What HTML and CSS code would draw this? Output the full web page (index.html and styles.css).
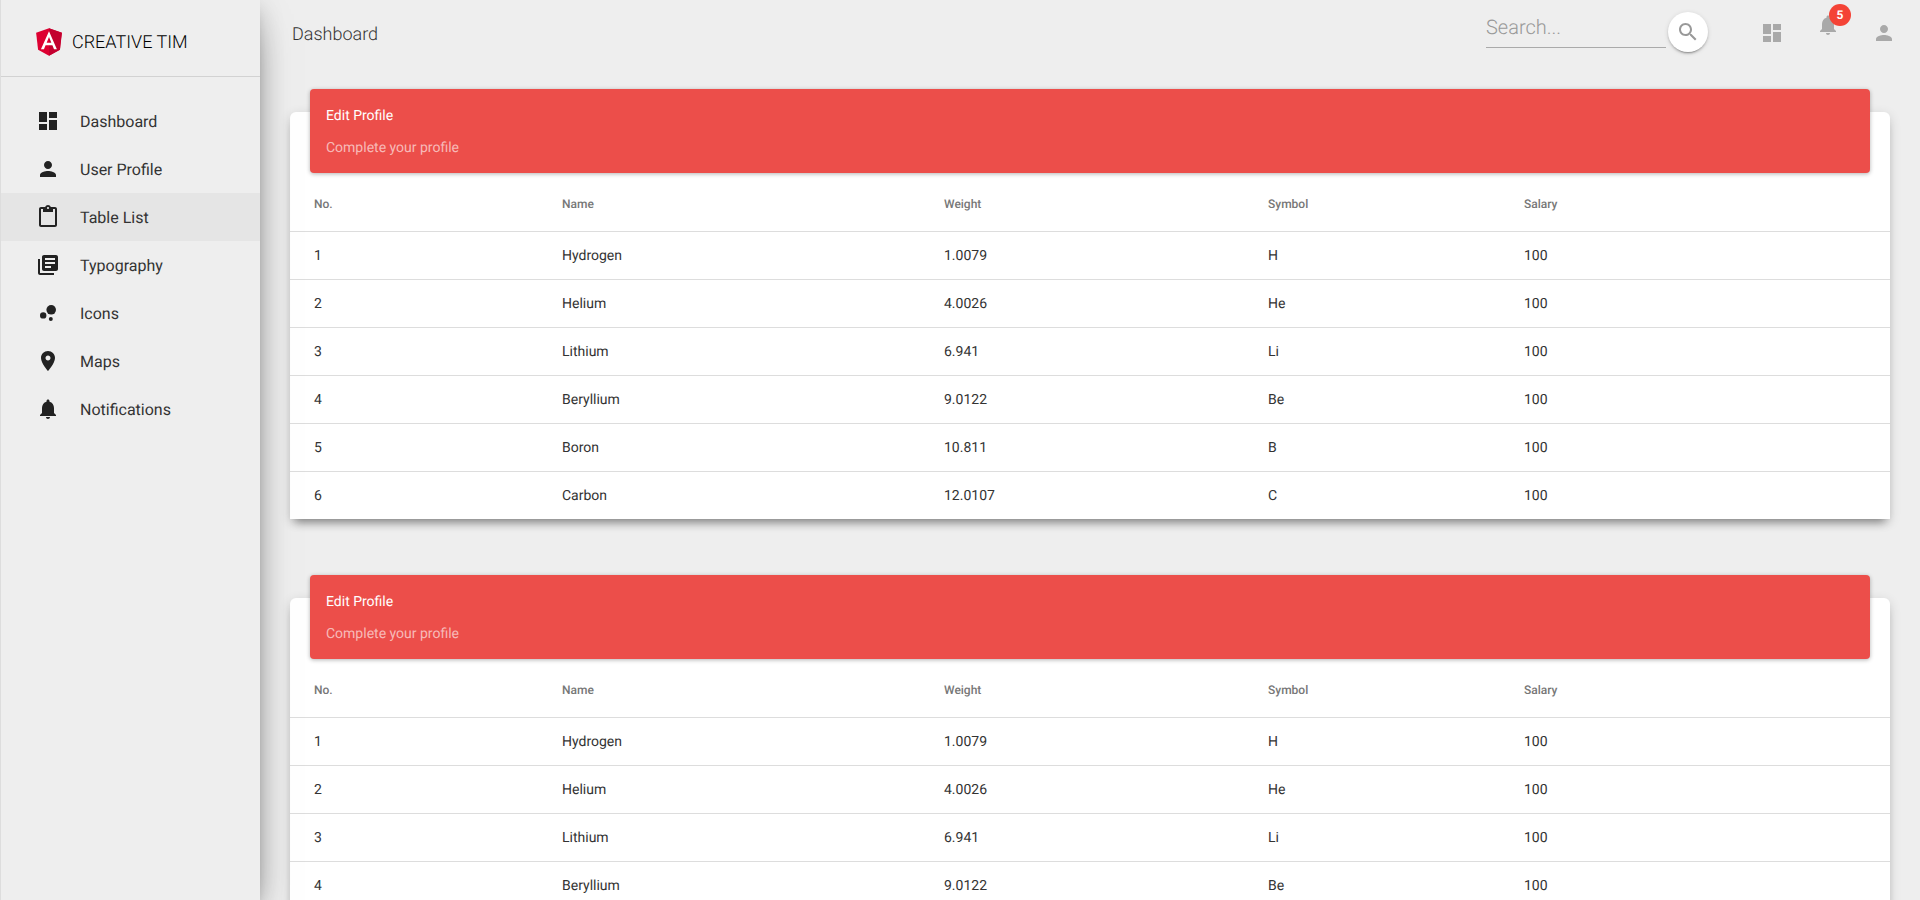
FILE: index.html
```html
<!DOCTYPE html>
<html lang="en">

<head>
    <meta charset="UTF-8">
    <title>Table List</title>
    <link rel="stylesheet" href="styles.css">
</head>

<body>
    <div class="wrapper">
        <aside class="sidebar">
            <div class="logo">
                <svg class="logo-img" viewBox="31 30 188 200">
                    <polygon fill="#dd0031" points="125,30 31.9,63.2 46.1,186.3 125,230 203.9,186.3 218.1,63.2" />
                    <polygon fill="#c3002f" points="125,30 125,52.2 125,230 203.9,186.3 218.1,63.2" />
                    <path fill="#fff" d="M125 52.1L66.8 182.6h21.7l11.7-29.2h49.4l11.7 29.2H182L125 52.1zm17 83.3h-34l17-40.9 17 40.9z" />
                </svg>
                <span>Creative Tim</span>
            </div>
            <ul class="nav">
                <li class="nav-item">
                    <svg class="icon" viewBox="0 0 24 24"><path d="M3 13h8V3H3v10zm0 8h8v-6H3v6zm10 0h8V11h-8v10zm0-18v6h8V3h-8z" /></svg>
                    <span>Dashboard</span>
                </li>
                <li class="nav-item">
                    <svg class="icon" viewBox="0 0 24 24"><path d="M12 12c2.21 0 4-1.79 4-4s-1.79-4-4-4-4 1.79-4 4 1.79 4 4 4zm0 2c-2.67 0-8 1.34-8 4v2h16v-2c0-2.66-5.33-4-8-4z" /></svg>
                    <span>User Profile</span>
                </li>
                <li class="nav-item active">
                    <svg class="icon" viewBox="0 0 24 24"><path d="M19 2h-4.18C14.4.84 13.3 0 12 0c-1.3 0-2.4.84-2.82 2H5c-1.1 0-2 .9-2 2v16c0 1.1.9 2 2 2h14c1.1 0 2-.9 2-2V4c0-1.1-.9-2-2-2zm-7 0c.55 0 1 .45 1 1s-.45 1-1 1-1-.45-1-1 .45-1 1-1zm7 18H5V4h2v3h10V4h2v16z" /></svg>
                    <span>Table List</span>
                </li>
                <li class="nav-item">
                    <svg class="icon" viewBox="0 0 24 24"><path d="M4 6H2v14c0 1.1.9 2 2 2h14v-2H4V6zm16-4H8c-1.1 0-2 .9-2 2v12c0 1.1.9 2 2 2h12c1.1 0 2-.9 2-2V4c0-1.1-.9-2-2-2zm-1 9H9V9h10v2zm-4 4H9v-2h6v2zm4-8H9V5h10v2z" /></svg>
                    <span>Typography</span>
                </li>
                <li class="nav-item">
                    <svg class="icon" viewBox="0 0 24 24"><circle cx="7.2" cy="14.4" r="3.2" /><circle cx="14.8" cy="18" r="2" /><circle cx="15.2" cy="8.8" r="4.8" /></svg>
                    <span>Icons</span>
                </li>
                <li class="nav-item">
                    <svg class="icon" viewBox="0 0 24 24"><path d="M12 2C8.13 2 5 5.13 5 9c0 5.25 7 13 7 13s7-7.75 7-13c0-3.87-3.13-7-7-7zm0 9.5c-1.38 0-2.5-1.12-2.5-2.5s1.12-2.5 2.5-2.5 2.5 1.12 2.5 2.5-1.12 2.5-2.5 2.5z" /></svg>
                    <span>Maps</span>
                </li>
                <li class="nav-item">
                    <svg class="icon" viewBox="0 0 24 24"><path d="M12 22c1.1 0 2-.9 2-2h-4c0 1.1.89 2 2 2zm6-6v-5c0-3.07-1.64-5.64-4.5-6.32V4c0-.83-.67-1.5-1.5-1.5s-1.5.67-1.5 1.5v.68C7.63 5.36 6 7.92 6 11v5l-2 2v1h16v-1l-2-2z" /></svg>
                    <span>Notifications</span>
                </li>
            </ul>
        </aside>

        <div class="main-panel">
            <nav class="navbar">
                <span class="navbar-brand">Dashboard</span>
                <div class="navbar-right">
                    <div class="search-input">Search...</div>
                    <button class="search-btn">
                        <svg class="icon-sm" viewBox="0 0 24 24"><path d="M15.5 14h-.79l-.28-.27C15.41 12.59 16 11.11 16 9.5 16 5.91 13.09 3 9.5 3S3 5.91 3 9.5 5.91 16 9.5 16c1.61 0 3.09-.59 4.23-1.57l.27.28v.79l5 4.99L20.49 19l-4.99-5zm-6 0C7.01 14 5 11.99 5 9.5S7.01 5 9.5 5 14 7.01 14 9.5 11.99 14 9.5 14z" /></svg>
                    </button>
                    <svg class="nav-icon" viewBox="0 0 24 24"><path d="M3 13h8V3H3v10zm0 8h8v-6H3v6zm10 0h8V11h-8v10zm0-18v6h8V3h-8z" /></svg>
                    <div class="bell">
                        <svg class="nav-icon" viewBox="0 0 24 24"><path d="M12 22c1.1 0 2-.9 2-2h-4c0 1.1.89 2 2 2zm6-6v-5c0-3.07-1.64-5.64-4.5-6.32V4c0-.83-.67-1.5-1.5-1.5s-1.5.67-1.5 1.5v.68C7.63 5.36 6 7.92 6 11v5l-2 2v1h16v-1l-2-2z" /></svg>
                        <span class="badge">5</span>
                    </div>
                    <svg class="nav-icon" viewBox="0 0 24 24"><path d="M12 12c2.21 0 4-1.79 4-4s-1.79-4-4-4-4 1.79-4 4 1.79 4 4 4zm0 2c-2.67 0-8 1.34-8 4v2h16v-2c0-2.66-5.33-4-8-4z" /></svg>
                </div>
            </nav>

            <div class="content">
                <div class="card">
                    <div class="card-header">
                        <h4>Edit Profile</h4>
                        <p>Complete your profile</p>
                    </div>
                    <table>
                        <thead>
                            <tr><th class="col-no">No.</th><th class="col-name">Name</th><th class="col-weight">Weight</th><th class="col-symbol">Symbol</th><th>Salary</th></tr>
                        </thead>
                        <tbody>
                            <tr><td>1</td><td>Hydrogen</td><td>1.0079</td><td>H</td><td>100</td></tr>
                            <tr><td>2</td><td>Helium</td><td>4.0026</td><td>He</td><td>100</td></tr>
                            <tr><td>3</td><td>Lithium</td><td>6.941</td><td>Li</td><td>100</td></tr>
                            <tr><td>4</td><td>Beryllium</td><td>9.0122</td><td>Be</td><td>100</td></tr>
                            <tr><td>5</td><td>Boron</td><td>10.811</td><td>B</td><td>100</td></tr>
                            <tr><td>6</td><td>Carbon</td><td>12.0107</td><td>C</td><td>100</td></tr>
                        </tbody>
                    </table>
                </div>

                <div class="card">
                    <div class="card-header">
                        <h4>Edit Profile</h4>
                        <p>Complete your profile</p>
                    </div>
                    <table>
                        <thead>
                            <tr><th class="col-no">No.</th><th class="col-name">Name</th><th class="col-weight">Weight</th><th class="col-symbol">Symbol</th><th>Salary</th></tr>
                        </thead>
                        <tbody>
                            <tr><td>1</td><td>Hydrogen</td><td>1.0079</td><td>H</td><td>100</td></tr>
                            <tr><td>2</td><td>Helium</td><td>4.0026</td><td>He</td><td>100</td></tr>
                            <tr><td>3</td><td>Lithium</td><td>6.941</td><td>Li</td><td>100</td></tr>
                            <tr><td>4</td><td>Beryllium</td><td>9.0122</td><td>Be</td><td>100</td></tr>
                        </tbody>
                    </table>
                </div>
            </div>
        </div>
    </div>
</body>

</html>
```

FILE: styles.css
```css
* {
    box-sizing: border-box;
}

html,
body {
    margin: 0;
    height: 100%;
    overflow: hidden;
}

body {
    background: #eee;
    color: #333;
    font-family: Roboto, "Liberation Sans", sans-serif;
    font-size: 14px;
    text-rendering: geometricPrecision;
}

.wrapper {
    display: flex;
    height: 900px;
    overflow: hidden;
}

.sidebar {
    position: relative;
    z-index: 2;
    flex: 0 0 260px;
    background: #eee;
    border-left: 1px solid #ddd;
    box-shadow: 0 16px 38px -12px rgba(0, 0, 0, 0.56), 0 4px 25px 0 rgba(0, 0, 0, 0.12), 0 8px 10px -5px rgba(0, 0, 0, 0.2);
}

.logo {
    display: flex;
    align-items: center;
    height: 77px;
    padding: 8px 0 0 35px;
    border-bottom: 1px solid #d2d2d2;
    font-size: 18px;
    font-weight: 300;
    text-transform: uppercase;
    color: #000;
}

.logo-img {
    width: 26px;
    height: 28px;
    margin-right: 10px;
}

.nav {
    list-style: none;
    margin: 20px 0 0;
    padding: 0;
}

.nav-item {
    display: flex;
    align-items: center;
    height: 48px;
    padding-left: 35px;
    font-size: 16px;
    font-weight: 400;
    color: #333;
}

.nav-item.active {
    background: #e5e5e5;
}

.icon {
    width: 24px;
    height: 24px;
    margin-right: 20px;
    fill: #222;
}

.main-panel {
    flex: 1;
    min-width: 0;
}

.navbar {
    display: flex;
    justify-content: space-between;
    height: 66px;
    padding: 12px 24px 0 32px;
}

.navbar-brand {
    margin-top: 12px;
    font-size: 18px;
    font-weight: 300;
    color: #333;
}

.navbar-right {
    display: flex;
    align-items: flex-start;
}

.search-input {
    width: 180px;
    height: 36px;
    border-bottom: 1px solid #aaa;
    font-size: 20px;
    font-weight: 300;
    line-height: 30px;
    color: #999;
}

.search-btn {
    display: flex;
    align-items: center;
    justify-content: center;
    width: 40px;
    height: 40px;
    margin-left: 2px;
    padding: 0;
    border: none;
    border-radius: 50%;
    background: #fff;
    box-shadow: 0 2px 2px 0 rgba(0, 0, 0, 0.14), 0 3px 1px -2px rgba(0, 0, 0, 0.2), 0 1px 5px 0 rgba(0, 0, 0, 0.12);
}

.icon-sm {
    width: 24px;
    height: 24px;
    fill: #999;
}

.nav-icon {
    display: block;
    width: 24px;
    height: 24px;
    margin-top: 9px;
    fill: #a9a9a9;
}

.search-btn + .nav-icon {
    margin-left: 52px;
}

.bell {
    position: relative;
    margin: -8px 32px 0;
}

.badge {
    position: absolute;
    top: 0;
    left: 13px;
    width: 22px;
    height: 22px;
    border-radius: 50%;
    background: #f44336;
    color: #fff;
    font-size: 12px;
    font-weight: 700;
    line-height: 22px;
    text-align: center;
}

.content {
    padding: 46px 30px 0;
}

.card {
    margin-bottom: 79px;
    border-radius: 6px 6px 0 0;
    background: #fff;
    box-shadow: 0 8px 10px -5px rgba(0, 0, 0, 0.4), 0 3px 12px 0 rgba(0, 0, 0, 0.14);
}

.card-header {
    position: relative;
    top: -23px;
    height: 84px;
    margin: 0 20px -23px;
    padding: 16px 16px 0;
    border-radius: 4px;
    background: #ec4e4a;
    color: #fff;
    box-shadow: 0 1px 4px rgba(0, 0, 0, 0.3);
}

.card-header h4 {
    margin: 0 0 13px;
    font-size: 14px;
    font-weight: 400;
    line-height: 22px;
}

.card-header p {
    margin: 0;
    font-size: 14px;
    font-weight: 400;
    line-height: 16px;
    color: rgba(255, 255, 255, 0.62);
}

table {
    width: 100%;
    border-collapse: collapse;
    table-layout: fixed;
}

th,
td {
    padding: 0 0 0 24px;
    text-align: left;
}

th {
    height: 58px;
    padding-top: 4px;
    font-size: 12px;
    font-weight: 500;
    color: #777;
}

td {
    height: 48px;
    padding-top: 1px;
    border-top: 1px solid #ddd;
    font-weight: 400;
    color: #333;
}

.col-no {
    width: 248px;
}

.col-name {
    width: 382px;
}

.col-weight {
    width: 324px;
}

.col-symbol {
    width: 256px;
}
```
